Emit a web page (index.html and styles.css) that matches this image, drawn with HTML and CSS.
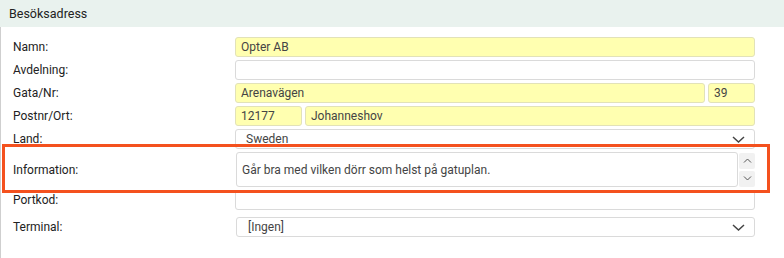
FILE: index.html
```html
<!DOCTYPE html>
<html lang="sv">
<head>
    <meta charset="UTF-8">
    <title>Besöksadress</title>
    <link rel="stylesheet" href="styles.css">
</head>
<body>
    <div class="panel">
        <!-- Header -->
        <div class="panel-header">Besöksadress</div>

        <div class="form">
            <div class="row">
                <label>Namn:</label>
                <input class="input required" type="text" value="Opter AB">
            </div>
            <div class="row">
                <label>Avdelning:</label>
                <input class="input" type="text" value="">
            </div>
            <div class="row">
                <label>Gata/Nr:</label>
                <div class="split street">
                    <input class="input required" type="text" value="Arenavägen">
                    <input class="input required" type="text" value="39">
                </div>
            </div>
            <div class="row">
                <label>Postnr/Ort:</label>
                <div class="split zip">
                    <input class="input required" type="text" value="12177">
                    <input class="input required" type="text" value="Johanneshov">
                </div>
            </div>
            <div class="row">
                <label>Land:</label>
                <div class="select">
                    <span>Sweden</span>
                    <svg width="13" height="7" viewBox="0 0 13 7"><polyline points="1,1 6.5,6 12,1" fill="none" stroke="#444" stroke-width="1.5"/></svg>
                </div>
            </div>
            <div class="row info">
                <label>Information:</label>
                <div class="textarea-wrap">
                    <textarea class="textarea" rows="1">Går bra med vilken dörr som helst på gatuplan.</textarea>
                    <div class="spinner">
                        <button type="button"><svg width="9" height="5" viewBox="0 0 9 5"><polyline points="1,4.5 4.5,1 8,4.5" fill="none" stroke="#555" stroke-width="1"/></svg></button>
                        <button type="button"><svg width="9" height="5" viewBox="0 0 9 5"><polyline points="1,0.5 4.5,4 8,0.5" fill="none" stroke="#555" stroke-width="1"/></svg></button>
                    </div>
                </div>
            </div>
            <div class="row">
                <label>Portkod:</label>
                <input class="input" type="text" value="">
            </div>
            <div class="row terminal">
                <label>Terminal:</label>
                <div class="select">
                    <span>[Ingen]</span>
                    <svg width="13" height="7" viewBox="0 0 13 7"><polyline points="1,1 6.5,6 12,1" fill="none" stroke="#444" stroke-width="1.5"/></svg>
                </div>
            </div>
        </div>
    </div>
</body>
</html>
```

FILE: styles.css
```css
/* General Styles */
body {
    margin: 0;
    padding: 0;
    font-family: Roboto, 'Liberation Sans', sans-serif;
    font-size: 12px;
    color: #222;
    background: white;
}

/* Panel */
.panel {
    height: 258px;
}

.panel-header {
    height: 27px;
    line-height: 27px;
    padding-left: 9px;
    font-size: 12.5px;
    color: #222;
    background-color: #e9f2ee;
}

.form {
    display: flex;
    flex-direction: column;
    gap: 3px;
    height: 231px;
    box-sizing: border-box;
    padding: 10px 29px 0 12px;
    border-left: 1px solid #cfcfcf;
}

/* Rows */
.row {
    display: grid;
    grid-template-columns: 222px 1fr;
    align-items: center;
}

.row label {
    color: #222;
}

.row.terminal {
    margin-top: 4px;
}

/* Fields */
.input,
.textarea,
.select {
    box-sizing: border-box;
    font-family: inherit;
    font-size: 12px;
    color: #444;
    border: 1px solid #dadada;
    border-radius: 3px;
    background: white;
    outline: none;
}

.input {
    width: 100%;
    height: 20px;
    padding: 0 5px;
    margin: 0;
}

.input.required {
    background-color: #ffffb0;
    border-color: #e2e2b8;
}

.split {
    display: flex;
    gap: 3px;
}

.street .input:last-child {
    width: 47px;
    flex: none;
}

.zip .input:first-child {
    width: 67px;
    flex: none;
}

.select {
    display: flex;
    align-items: center;
    justify-content: space-between;
    height: 20px;
    padding: 0 9px 0 10px;
}

.terminal .select {
    margin-left: 1px;
    padding-left: 11px;
}

/* Information */
.info {
    position: relative;
}

.info::after {
    content: '';
    position: absolute;
    top: -8px;
    bottom: -6px;
    left: -11px;
    right: -15px;
    border: 3px solid #f4511e;
    pointer-events: none;
}

.textarea-wrap {
    display: flex;
    align-items: center;
    gap: 1px;
    margin-left: 1px;
}

.textarea {
    flex: 1;
    height: 35px;
    padding: 9px 5px;
    line-height: 16px;
    resize: none;
    overflow: hidden;
}

.spinner {
    display: flex;
    flex-direction: column;
    gap: 2px;
}

.spinner button {
    display: flex;
    align-items: center;
    justify-content: center;
    width: 16px;
    height: 16px;
    padding: 0;
    border: none;
    border-radius: 2px;
    background-color: #f1f1f1;
}
```
